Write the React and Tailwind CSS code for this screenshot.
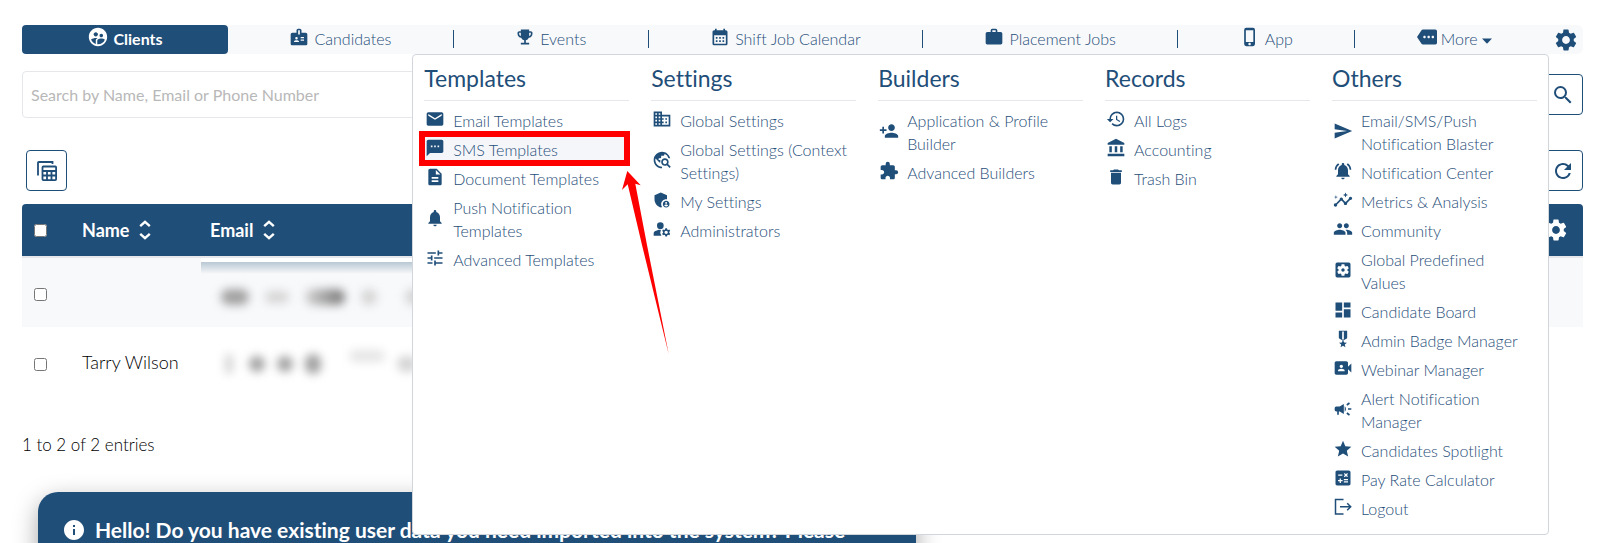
import { useState } from "react";
import {
  MdAccountBalance,
  MdAdminPanelSettings,
  MdBadge,
  MdCalculate,
  MdCalendarMonth,
  MdCampaign,
  MdDashboard,
  MdDelete,
  MdDescription,
  MdDomain,
  MdEmail,
  MdEmojiEvents,
  MdExtension,
  MdGroup,
  MdHistory,
  MdInfo,
  MdInsights,
  MdManageAccounts,
  MdMilitaryTech,
  MdMore,
  MdNotifications,
  MdNotificationsActive,
  MdPersonAdd,
  MdPhoneIphone,
  MdRefresh,
  MdSearch,
  MdSend,
  MdSettings,
  MdSettingsApplications,
  MdStar,
  MdSupervisedUserCircle,
  MdTextsms,
  MdTravelExplore,
  MdTune,
  MdVideoCameraFront,
  MdWork,
} from "react-icons/md";

const tabs = [
  { label: "Candidates", icon: MdBadge },
  { label: "Events", icon: MdEmojiEvents },
  { label: "Shift Job Calendar", icon: MdCalendarMonth },
  { label: "Placement Jobs", icon: MdWork },
  { label: "App", icon: MdPhoneIphone },
];

const menu = [
  {
    title: "Templates",
    items: [
      { label: "Email Templates", icon: MdEmail },
      { label: "SMS Templates", icon: MdTextsms, marked: true },
      { label: "Document Templates", icon: MdDescription },
      { label: "Push Notification Templates", icon: MdNotifications },
      { label: "Advanced Templates", icon: MdTune },
    ],
  },
  {
    title: "Settings",
    items: [
      { label: "Global Settings", icon: MdDomain },
      { label: "Global Settings (Context Settings)", icon: MdTravelExplore },
      { label: "My Settings", icon: MdAdminPanelSettings },
      { label: "Administrators", icon: MdManageAccounts },
    ],
  },
  {
    title: "Builders",
    items: [
      { label: "Application & Profile Builder", icon: MdPersonAdd },
      { label: "Advanced Builders", icon: MdExtension },
    ],
  },
  {
    title: "Records",
    items: [
      { label: "All Logs", icon: MdHistory },
      { label: "Accounting", icon: MdAccountBalance },
      { label: "Trash Bin", icon: MdDelete },
    ],
  },
  {
    title: "Others",
    items: [
      { label: "Email/SMS/Push Notification Blaster", icon: MdSend },
      { label: "Notification Center", icon: MdNotificationsActive },
      { label: "Metrics & Analysis", icon: MdInsights },
      { label: "Community", icon: MdGroup },
      { label: "Global Predefined Values", icon: MdSettingsApplications },
      { label: "Candidate Board", icon: MdDashboard },
      { label: "Admin Badge Manager", icon: MdMilitaryTech },
      { label: "Webinar Manager", icon: MdVideoCameraFront },
      { label: "Alert Notification Manager", icon: MdCampaign },
      { label: "Candidates Spotlight", icon: MdStar },
      { label: "Pay Rate Calculator", icon: MdCalculate },
      { label: "Logout", icon: LogoutIcon },
    ],
  },
];

export default function App() {
  const [search, setSearch] = useState("");

  return (
    <main className="h-screen overflow-hidden bg-white pt-[25px] pr-[17px] pl-[22px] font-['Lato',sans-serif] text-[#1f4e79] [font-variant-ligatures:none]">
      <nav className="relative flex h-[29px] rounded-md bg-[#f8f9fb] pr-1 text-base leading-5 font-light">
        <a
          href="#clients"
          className="flex flex-auto items-center justify-center gap-1 rounded bg-[#1f4e79] px-1 pb-0.5 font-bold text-white"
        >
          <MdSupervisedUserCircle className="mb-1 size-[22px]" />
          Clients
        </a>
        {tabs.map(({ label, icon: Icon }) => (
          <a
            key={label}
            href="#tab"
            className="flex flex-auto items-center justify-center pb-0.5 whitespace-nowrap"
          >
            <span className="flex flex-1 items-center justify-center gap-[5px]">
              <Icon className="mb-1 size-5" />
              {label}
            </span>
            <span className="h-[18px] w-px bg-[#1f4e79]" />
          </a>
        ))}
        <button className="flex flex-auto items-center justify-center gap-1 pb-0.5">
          <MdMore className="mb-1 size-5" />
          More
          <svg viewBox="0 0 10 6" className="mt-1 h-[6px] w-[10px]" fill="currentColor">
            <path d="M0 0.5h10L5 5.8z" />
          </svg>
        </button>
        <button aria-label="Settings">
          <MdSettings className="size-[26px]" />
        </button>

        <MegaMenu />
      </nav>

      <div className="mt-[17px] flex items-center gap-2">
        <input
          type="text"
          aria-label="Search"
          value={search}
          onChange={(e) => setSearch(e.target.value)}
          placeholder="Search by Name, Email or Phone Number"
          className="h-[47px] flex-1 rounded border border-gray-200 px-2 text-base text-black placeholder:text-[#b8b8b8]"
        />
        <IconButton label="Run search">
          <MdSearch className="size-6" />
        </IconButton>
      </div>

      <div className="mt-8 flex justify-between pl-1">
        <IconButton label="Columns">
          <TablesIcon />
        </IconButton>
        <IconButton label="Refresh">
          <MdRefresh className="size-6" />
        </IconButton>
      </div>

      <table className="mt-[13px] w-full table-fixed text-left text-black">
        <thead>
          <tr className="h-[53px] bg-[#1f4e79] text-lg text-white">
            <th className="w-[60px] rounded-tl pl-3">
              <Checkbox label="Select all" />
            </th>
            <th className="w-[119px]">
              <SortLabel>Name</SortLabel>
            </th>
            <th className="pl-[9px]">
              <SortLabel>Email</SortLabel>
            </th>
            <th className="w-[60px] rounded-tr pl-5">
              <button aria-label="Table settings" className="block">
                <MdSettings className="size-[26px]" />
              </button>
            </th>
          </tr>
        </thead>
        <tbody>
          <tr className="h-[70px] border-t-2 border-gray-200 bg-[#f8f9fb]">
            <td className="pt-1 pl-3">
              <Checkbox label="Select row" />
            </td>
            <td />
            <td className="bg-[linear-gradient(#fff_4px,#b9c8d3_4px,#f8f9fb_16px)] pt-2 pl-5">
              <div className="flex items-center gap-4 blur-[5px]">
                <span className="h-4 w-7 rounded-full bg-neutral-400" />
                <span className="h-3 w-6 rounded-full bg-neutral-300" />
                <span className="h-4 w-10 rounded-full bg-linear-to-r from-neutral-300 to-neutral-500" />
                <span className="h-4 w-4 rounded-full bg-neutral-300" />
                <span className="ml-3 h-4 w-5 rounded-full bg-neutral-300" />
              </div>
            </td>
            <td />
          </tr>
          <tr className="h-[70px]">
            <td className="pt-1 pl-3">
              <Checkbox label="Select Tarry Wilson" />
            </td>
            <td className="text-lg font-light whitespace-nowrap">Tarry Wilson</td>
            <td className="pt-1 pl-6">
              <div className="flex items-center gap-3 blur-[5px]">
                <span className="h-5 w-2 rounded-full bg-neutral-300" />
                <span className="ml-1 h-4 w-4 rounded-full bg-neutral-400" />
                <span className="h-4 w-4 rounded-full bg-neutral-400" />
                <span className="h-5 w-4 rounded-full bg-neutral-400" />
                <span className="mb-4 ml-4 h-3 w-9 rounded-full bg-neutral-200" />
                <span className="h-4 w-5 rounded-full bg-neutral-300" />
              </div>
            </td>
            <td />
          </tr>
        </tbody>
      </table>

      <p className="mt-[34px] text-[17px] leading-7 font-light text-black">
        1 to 2 of 2 entries
      </p>

      <div className="mt-[33px] ml-4 flex w-[56.25%] items-center gap-[9px] rounded-[20px] bg-[#1f4e79] px-6 pt-6 pb-10 text-[21px] leading-7 font-bold whitespace-nowrap text-white shadow-[0_8px_24px_rgba(0,0,0,0.35)]">
        <MdInfo className="size-6 shrink-0" />
        Hello! Do you have existing user data you need imported into the system? Please
      </div>
    </main>
  );
}

function MegaMenu() {
  return (
    <div className="absolute top-full right-[34px] left-1/4 z-10 grid grid-cols-5 gap-[22px] rounded border border-gray-300 bg-white px-[11px] pt-[7px] pb-[11px] font-normal">
      {menu.map((group) => (
        <section key={group.title}>
          <h2 className="border-b border-gray-200 pb-[5px] text-[23px] leading-[33px]">
            {group.title}
          </h2>
          <ul className="pt-[5px]">
            {group.items.map((item) => (
              <MenuItem key={item.label} {...item} />
            ))}
          </ul>
        </section>
      ))}
    </div>
  );
}

function MenuItem({ icon: Icon, label, marked }) {
  return (
    <li className={marked ? "relative bg-[#f5f6f9]" : ""}>
      <a
        href="#menu"
        className="flex items-center gap-2 py-[3px] pr-2 pl-px text-base leading-[23px] font-light"
      >
        <Icon className="mb-[3px] size-5 shrink-0" />
        {label}
      </a>
      {marked && (
        <>
          <span className="absolute -top-1 -right-px -bottom-[2px] -left-[5px] border-[6px] border-[#ff0000]" />
          <svg
            viewBox="0 0 50 190"
            className="absolute top-9 left-[196px] h-[190px] w-[50px]"
            fill="#ff0000"
          >
            <path d="M7.3 0 20.7 14.3 15.3 12.7 27 74 48.7 183 22 74 7.7 13.3 2 19z" />
          </svg>
        </>
      )}
    </li>
  );
}

function IconButton({ label, children }) {
  return (
    <button
      aria-label={label}
      className="flex size-[41px] items-center justify-center rounded border border-[#1f4e79]"
    >
      {children}
    </button>
  );
}

function Checkbox({ label }) {
  return <input type="checkbox" aria-label={label} className="block size-[13px]" />;
}

function SortLabel({ children }) {
  return (
    <button className="flex items-center gap-[10px]">
      {children}
      <svg
        viewBox="0 0 12 20"
        className="h-5 w-3"
        fill="none"
        stroke="currentColor"
        strokeWidth="2.4"
      >
        <path d="M1.2 6.2 6 1.8l4.8 4.4M1.2 13.8 6 18.2l4.8-4.4" />
      </svg>
    </button>
  );
}

function TablesIcon() {
  return (
    <svg viewBox="0 0 20 20" className="size-5" fill="none" stroke="currentColor" strokeWidth="1.8">
      <path d="M1 14.5V1.9Q1 1 1.9 1h13.6V3" />
      <rect x="5.5" y="5.5" width="13.6" height="13.6" rx="0.8" />
      <path d="M5.5 10h13.6M5.5 14.5h13.6M10 10v9M14.5 10v9" />
    </svg>
  );
}

function LogoutIcon({ className }) {
  return (
    <svg viewBox="0 0 20 20" className={className} fill="none" stroke="currentColor" strokeWidth="1.5">
      <path d="M10.5 2.5H2.5v14.4h8M7 9.7h10.5M14.2 6.2l3.5 3.5-3.5 3.5" />
    </svg>
  );
}
